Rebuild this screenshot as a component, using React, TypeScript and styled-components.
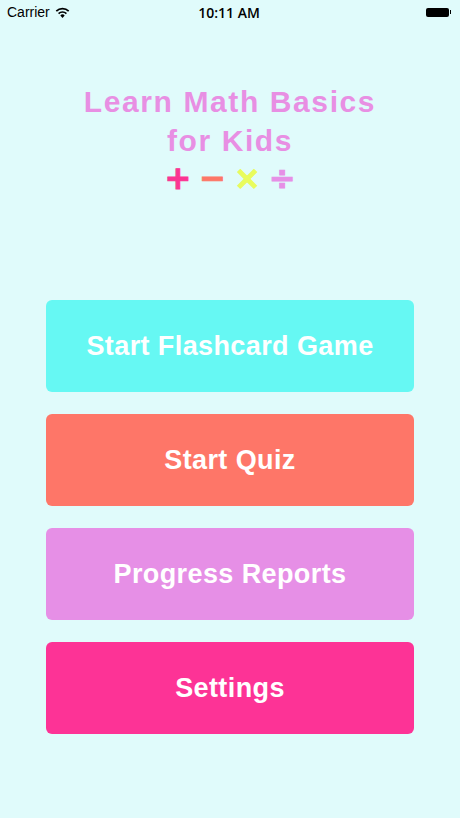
import React from "react";
import styled, { createGlobalStyle } from "styled-components";

const Global = createGlobalStyle`
  html, body { margin: 0; padding: 0; background: #e0fbfb; }
  body { font-family: "Liberation Sans", Arial, sans-serif; }
`;

const Screen = styled.div`
  width: 460px;
  height: 818px;
  background: #e0fbfb;
  display: flex;
  flex-direction: column;
  overflow: hidden;
`;

const StatusBar = styled.div`
  height: 24px;
  display: grid;
  grid-template-columns: 1fr auto 1fr;
  align-items: center;
  padding: 0 9px 0 7px;
  font-size: 14px;
  color: #000;
`;

const Carrier = styled.div`
  display: flex;
  align-items: center;
  gap: 5px;
`;

const Time = styled.div`
  font-weight: 600;
  font-family: "Open Sans", "Liberation Sans", sans-serif;
  font-size: 14px;
`;

const BatteryWrap = styled.div`
  justify-self: end;
  display: flex;
  align-items: center;
`;

const Battery = styled.div`
  width: 23px;
  height: 9px;
  background: #000;
  border-radius: 2px;
`;

const BatteryTip = styled.div`
  width: 1.5px;
  height: 4px;
  background: #000;
  margin-left: 1px;
`;

const Header = styled.div`
  margin-top: 58px;
  display: flex;
  flex-direction: column;
  align-items: center;
`;

const Title = styled.h1`
  margin: 0;
  font-size: 30px;
  line-height: 39px;
  letter-spacing: 1.6px;
  font-weight: 700;
  color: #e88fe3;
  text-align: center;
`;

const Symbols = styled.div`
  display: flex;
  align-items: center;
  gap: 8px;
  margin-top: 3px;
  height: 30px;
`;

const Symbol = styled.span<{ $c: string }>`
  font-family: "DejaVu Sans", sans-serif;
  font-weight: 700;
  font-size: 32px;
  line-height: 30px;
  color: ${(p) => p.$c};
  -webkit-text-stroke: 1px ${(p) => p.$c};
`;

const Menu = styled.div`
  margin-top: 107px;
  padding: 0 46px;
  display: flex;
  flex-direction: column;
  gap: 22px;
`;

const MenuButton = styled.button<{ $bg: string }>`
  height: 92px;
  border: none;
  border-radius: 6px;
  background: ${(p) => p.$bg};
  color: #fff;
  font-family: "Liberation Sans", Arial, sans-serif;
  font-weight: 700;
  font-size: 27px;
  letter-spacing: 0.4px;
  cursor: pointer;
`;

const Wifi = () => (
  <svg width="15" height="11" viewBox="0 0 15 11">
    <path d="M7.5 11 L5.3 8.4 A3.2 3.2 0 0 1 9.7 8.4 Z" fill="#000" />
    <path d="M3.6 6.6 A5.6 5.6 0 0 1 11.4 6.6" stroke="#000" strokeWidth="1.7" fill="none" />
    <path d="M1.3 4.1 A8.8 8.8 0 0 1 13.7 4.1" stroke="#000" strokeWidth="1.7" fill="none" />
  </svg>
);

const buttons = [
  { label: "Start Flashcard Game", bg: "#66f8f3" },
  { label: "Start Quiz", bg: "#fe7668" },
  { label: "Progress Reports", bg: "#e68fe6" },
  { label: "Settings", bg: "#fd3396" },
];

export default function App() {
  return (
    <>
      <Global />
      <Screen>
        <StatusBar>
          <Carrier>
            Carrier <Wifi />
          </Carrier>
          <Time>10:11 AM</Time>
          <BatteryWrap>
            <Battery />
            <BatteryTip />
          </BatteryWrap>
        </StatusBar>
        <Header>
          <Title>
            Learn Math Basics
            <br />
            for Kids
          </Title>
          <Symbols>
            <Symbol $c="#fb3493">+</Symbol>
            <Symbol $c="#fd7767">−</Symbol>
            <Symbol $c="#e9fc5c">×</Symbol>
            <Symbol $c="#e68fe6">÷</Symbol>
          </Symbols>
        </Header>
        <Menu>
          {buttons.map((b) => (
            <MenuButton key={b.label} $bg={b.bg}>
              {b.label}
            </MenuButton>
          ))}
        </Menu>
      </Screen>
    </>
  );
}
